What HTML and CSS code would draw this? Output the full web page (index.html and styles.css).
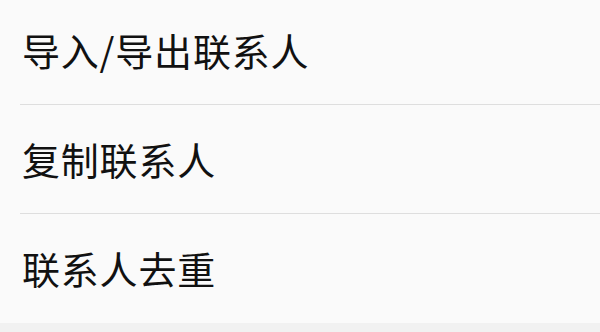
FILE: index.html
```html
<!DOCTYPE html>
<html lang="zh-CN">
<head>
    <meta charset="UTF-8">
    <meta name="viewport" content="width=device-width, initial-scale=1.0">
    <title>联系人</title>
    <link rel="stylesheet" href="styles.css">
</head>
<body>
    <ul class="menu">
        <li class="menu-item">导入/导出联系人</li>
        <li class="menu-item">复制联系人</li>
        <li class="menu-item">联系人去重</li>
    </ul>
    <div class="bottom-band"></div>
</body>
</html>
```

FILE: styles.css
```css
body {
    margin: 0;
    background-color: #fafafa;
    font-family: "Noto Sans CJK SC", "Noto Sans", sans-serif;
    height: 332px;
    overflow: hidden;
    display: flex;
    flex-direction: column;
}
.menu {
    list-style: none;
    margin: -4px 0 0 0;
    padding: 0 0 0 20px;
}
.menu-item {
    height: 109px;
    display: flex;
    align-items: center;
    padding-left: 2px;
    padding-bottom: 2px;
    box-sizing: border-box;
    font-size: 38px;
    letter-spacing: 0.8px;
    color: #111111;
    border-bottom: 1px solid #dedede;
}
.menu-item:last-child {
    border-bottom: none;
}
.bottom-band {
    flex: 1;
    background-color: #f1f1f1;
}
```
